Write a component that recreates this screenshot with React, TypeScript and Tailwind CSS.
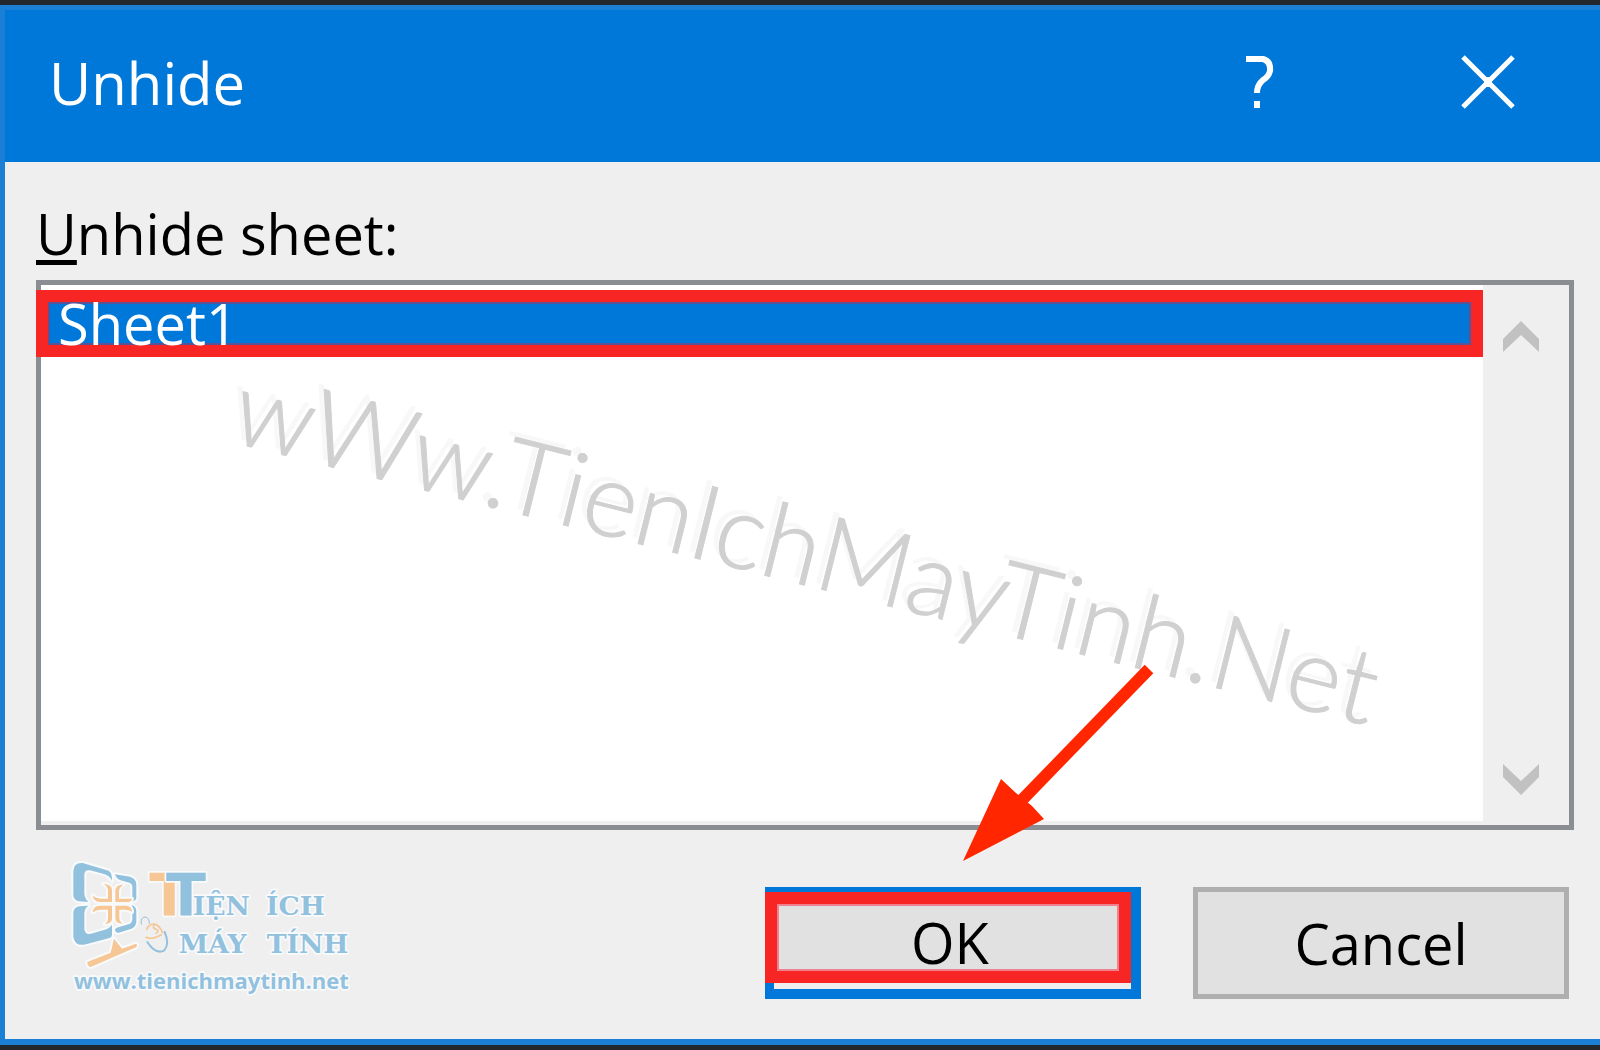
import { useState } from 'react'

const sheets = ['Sheet1']

function Logo() {
  return (
    <svg viewBox="60 42 870 435" className="w-[290px] h-[145px] shrink-0" role="img" aria-label="Tiện ích máy tính">
      {/* Monitor */}
      <g stroke="#f8fafc" strokeWidth="12" strokeLinejoin="round" style={{ paintOrder: 'stroke' }}>
        <g fill="#92c1de">
          <path d="M70 92Q72 66 98 69L176 92Q187 98 186 122Q178 106 162 102L120 91Q104 88 103 104V160Q104 178 116 186L86 184Q70 180 70 166Z" />
          <path d="M195 103L240 110Q259 116 259 134V174Q258 184 240 186Q247 178 247 170V138Q246 130 238 128L212 121Q200 118 195 103Z" />
          <path d="M70 218Q71 202 88 199L116 197Q104 204 103 220V268Q105 284 120 282L162 270Q178 266 186 254V284Q186 292 176 295L102 314Q74 318 70 290Z" />
          <path d="M245 196Q259 200 259 214V246Q257 262 242 267L206 278Q196 280 195 268Q198 262 210 260L238 252Q247 248 247 238V216Z" />
        </g>
        <g fill="#f6c795">
          <path d="M160 132Q186 134 186 150V186H150Q130 186 128 166Q138 176 152 176H174V154Q174 138 160 132Z" />
          <path d="M196 186V150Q198 134 220 134Q207 142 207 154V176H246Q244 186 232 186Z" />
          <path d="M128 217Q130 198 148 197H186V236Q186 250 164 252Q174 246 174 234V209H152Q138 209 128 217Z" />
          <path d="M196 197H230Q246 200 246 216Q238 209 224 209H208V234Q209 246 218 250Q198 252 196 238Z" />
          <path d="M112 366L182 338L192 296L216 326L258 311Q264 314 258 322L122 381Q112 380 112 366Z" />
        </g>
      </g>
      {/* Mouse */}
      <g fill="none" strokeWidth="5" strokeLinecap="round">
        <path d="M274 252Q270 232 286 231Q298 234 298 250" stroke="#92c1de" strokeWidth="3" />
        <path d="M290 268Q296 252 314 252Q330 258 338 278M288 292Q306 300 334 284M314 254Q304 262 318 268Q330 272 318 280" stroke="#f6c795" />
        <path d="M344 276Q360 312 342 332Q316 344 292 306" stroke="#92c1de" strokeWidth="6" />
      </g>
      {/* Name and address */}
      <g fill="#92c1de" stroke="#f8fafc" strokeWidth="10" strokeLinejoin="round" style={{ paintOrder: 'stroke' }} className="font-bold">
        <text x="298" y="228" fill="#f6c795" className="text-[176px] font-['DejaVu_Sans']">T</text>
        <text x="348" y="228" className="text-[176px] font-['DejaVu_Sans']">T</text>
        <g className="text-[80px] font-['DejaVu_Serif']">
          <text x="428" y="226">IỆN</text>
          <text x="648" y="226">ÍCH</text>
          <text x="386" y="340">MÁY</text>
          <text x="650" y="340">TÍNH</text>
        </g>
        <text x="72" y="447" className="text-[66px] font-['Open_Sans']">www.tienichmaytinh.net</text>
      </g>
    </svg>
  )
}

export default function App() {
  const [selected, setSelected] = useState('Sheet1')

  return (
    <div className="min-h-screen flex flex-col bg-[#efefef] border-y-5 border-[#24272c] font-['Open_Sans',sans-serif] text-[56px] text-black">
      <div className="flex-1 flex flex-col border-t-5 border-l-5 border-b-6 border-[#1c7fd6]">
        {/* Title bar */}
        <header className="h-[152px] flex items-center justify-between bg-[#0078d9] text-white pl-11 pr-[85px] pb-2">
          <h1 className="text-[58px]">Unhide</h1>
          <div className="flex items-center gap-[186px]">
            <button aria-label="Help">
              <svg viewBox="0 0 32 54" className="w-8 h-[54px] block" fill="none" stroke="#fff" strokeWidth="6">
                <path d="M3 4H20Q28 6 27 16Q26 21 20 25Q14 30 14 38M14 46V53" />
              </svg>
            </button>
            <button aria-label="Close">
              <svg viewBox="0 0 54 54" className="w-[54px] h-[54px] block" fill="none" stroke="#fff" strokeWidth="5">
                <path d="M2 2L52 52M52 2L2 52" />
                <path d="M23 27H31" strokeWidth="10" />
              </svg>
            </button>
          </div>
        </header>

        <main className="flex-1 flex flex-col pt-[33px] pb-10 pl-[31px] pr-[26px]">
          <span id="sheet-label" className="leading-[76px]">
            <span className="underline decoration-[5px] underline-offset-[5px]">U</span>nhide sheet:
          </span>

          {/* Sheet list */}
          <div className="relative flex-1 flex mt-[9px] border-5 border-[#8a8d92] bg-[#efefef] pb-1">
            <ul role="listbox" aria-labelledby="sheet-label" className="flex-1 bg-white pt-[5px]">
              {sheets.map((name) => (
                <li
                  key={name}
                  role="option"
                  aria-selected={name === selected}
                  onClick={() => setSelected(name)}
                  className="-ml-[5px] h-[67px] border-12 border-[#f82525] bg-[#0078d9]"
                >
                  <div className="h-full border-2 border-[#5c5296] pl-2 leading-[39px] text-white">{name}</div>
                </li>
              ))}
            </ul>
            <div className="w-[86px] flex flex-col justify-between items-center pt-9 pb-[26px] pr-[10px]">
              <button aria-label="Scroll up">
                <svg viewBox="0 0 36 31" className="w-9 h-[31px] block" fill="#c1c1c1">
                  <path d="M18 0L36 18V31L18 14L0 31V18Z" />
                </svg>
              </button>
              <button aria-label="Scroll down">
                <svg viewBox="0 0 36 31" className="w-9 h-[31px] block" fill="#c1c1c1">
                  <path d="M18 31L36 13V0L18 17L0 0V13Z" />
                </svg>
              </button>
            </div>
            {/* Watermark */}
            <div className="absolute left-[184px] top-[64px] origin-bottom-left rotate-[14deg] whitespace-nowrap pointer-events-none font-['Lato'] font-light text-[104px] leading-[104px] text-[#d0d0d0] [-webkit-text-stroke:1px_#d0d0d0] [text-shadow:-7px_-5px_1px_#f8f8f8]">
              wWw.TienIchMayTinh.Net
            </div>
          </div>

          {/* Actions */}
          <div className="flex items-end justify-between pt-6 pl-[34px] pr-[5px]">
            <Logo />
            <div className="flex gap-[52px]">
              <div className="relative">
                <button className="w-[376px] h-28 flex flex-col bg-[#0078d9] pt-[5px] pr-[10px]">
                  <span className="w-full h-[91px] flex items-center justify-center pt-2 pl-1 border-12 border-[#f82525] bg-[#e1e1e1] outline-2 -outline-offset-14 outline-[#ee8090]">
                    OK
                  </span>
                  <span className="self-stretch h-[6px] ml-[9px] bg-[#efefef]" />
                </button>
                <svg viewBox="0 0 200 204" className="absolute left-[194px] bottom-[132px] w-[200px] h-[204px] pointer-events-none">
                  <path d="M190 6L62 138" stroke="#ff2600" strokeWidth="12" />
                  <path d="M4 198L42 116L57 130L73 143L85 156Z" fill="#ff2600" />
                </svg>
              </div>
              <button className="w-[376px] h-28 border-5 border-[#afafaf] bg-[#e1e1e1]">Cancel</button>
            </div>
          </div>
        </main>
      </div>
    </div>
  )
}
